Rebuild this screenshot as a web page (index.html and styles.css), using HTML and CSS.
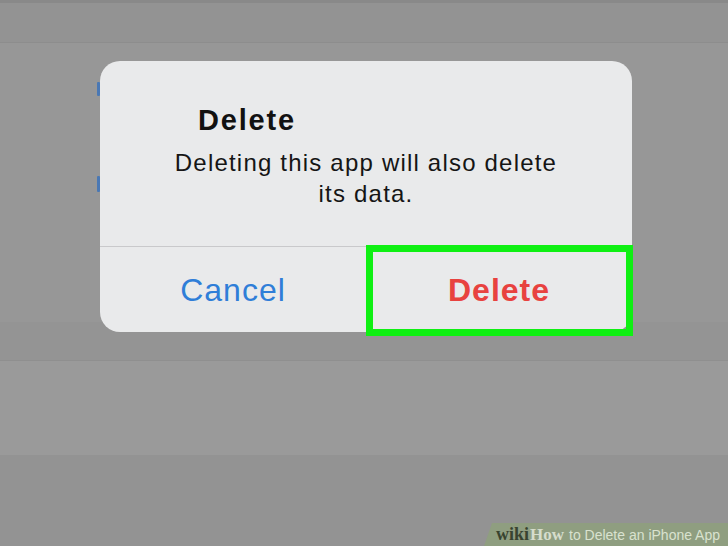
FILE: index.html
```html
<!DOCTYPE html>
<html>
<head>
<meta charset="utf-8">
<link rel="stylesheet" href="styles.css">
</head>
<body>
<div class="screen">
  <div class="band band-top"></div>
  <div class="band band-nav"></div>
  <div class="band band-list">
    <span class="peek peek-1"></span>
    <span class="peek peek-2"></span>
  </div>
  <div class="band band-gap"></div>
  <div class="band band-row"></div>
  <div class="band band-bottom"></div>

  <div class="alert">
    <div class="alert-body">
      <div class="alert-title">Delete</div>
      <div class="alert-msg">Deleting this app will also delete<br>its data.</div>
    </div>
    <div class="alert-actions">
      <div class="btn btn-cancel">Cancel</div>
      <div class="btn btn-delete">Delete</div>
    </div>
  </div>

  <div class="highlight"></div>

  <div class="banner">
    <span class="b-wiki">wiki</span><span class="b-how">How</span><span class="b-text">to Delete an iPhone App</span>
  </div>
</div>
</body>
</html>
```

FILE: styles.css
```css
html, body {
  margin: 0;
  padding: 0;
}
body {
  width: 728px;
  height: 546px;
  overflow: hidden;
  font-family: "Liberation Sans", Arial, sans-serif;
}
.screen {
  position: relative;
  width: 728px;
  height: 546px;
  display: flex;
  flex-direction: column;
  background: #939393;
}
.band { flex: none; }
.band-top { height: 3px; background: #898989; }
.band-nav { height: 39px; background: #939393; border-bottom: 1px solid #8d8d8d; }
.band-list { height: 279px; background: #979797; position: relative; }
.band-gap { height: 38px; background: #949494; border-bottom: 1px solid #8f8f8f; }
.band-row { height: 94px; background: #9a9a9a; }
.band-bottom { flex: 1; background: #939393; }

.peek {
  position: absolute;
  left: 97px;
  width: 3px;
  background: #4a78b4;
  border-radius: 1px;
}
.peek-1 { top: 39px; height: 14px; }
.peek-2 { top: 133px; height: 16px; }

.alert {
  position: absolute;
  left: 100px;
  top: 61px;
  width: 532px;
  height: 271px;
  background: #e9eaeb;
  border-radius: 20px;
  display: flex;
  flex-direction: column;
}
.alert-body {
  height: 186px;
  box-sizing: border-box;
  padding-top: 42px;
  border-bottom: 1px solid #c9c9cb;
}
.alert-title {
  padding-left: 98px;
  font-size: 29px;
  line-height: 34px;
  font-weight: bold;
  letter-spacing: 1.8px;
  color: #111;
}
.alert-msg {
  margin-top: 10px;
  text-align: center;
  font-size: 24px;
  line-height: 31px;
  letter-spacing: 1.2px;
  color: #151515;
}
.alert-actions {
  flex: 1;
  display: flex;
}
.btn {
  flex: 1;
  display: flex;
  align-items: center;
  justify-content: center;
  font-size: 32px;
  letter-spacing: 1px;
  padding-top: 2px;
}
.btn-cancel { color: #2f7ed8; }
.btn-delete { color: #e8423f; font-weight: bold; }

.highlight {
  position: absolute;
  left: 366px;
  top: 245px;
  width: 267px;
  height: 91px;
  box-sizing: border-box;
  border: 7px solid #0ff013;
}

.banner {
  position: absolute;
  right: 0;
  bottom: 0;
  width: 244px;
  height: 23px;
  background: #8f9e80;
  clip-path: polygon(8px 0, 100% 0, 100% 100%, 0 100%);
  box-sizing: border-box;
  padding-left: 12px;
  display: flex;
  align-items: baseline;
  line-height: 23px;
  white-space: nowrap;
}
.b-wiki {
  font-family: "Liberation Serif", serif;
  font-weight: bold;
  font-size: 18px;
  color: #38432f;
}
.b-how {
  font-family: "Liberation Serif", serif;
  font-weight: bold;
  font-size: 17px;
  color: #d6ddcc;
  margin-left: 1px;
}
.b-text {
  font-size: 14px;
  color: #d9e2cf;
  margin-left: 5px;
}
```
